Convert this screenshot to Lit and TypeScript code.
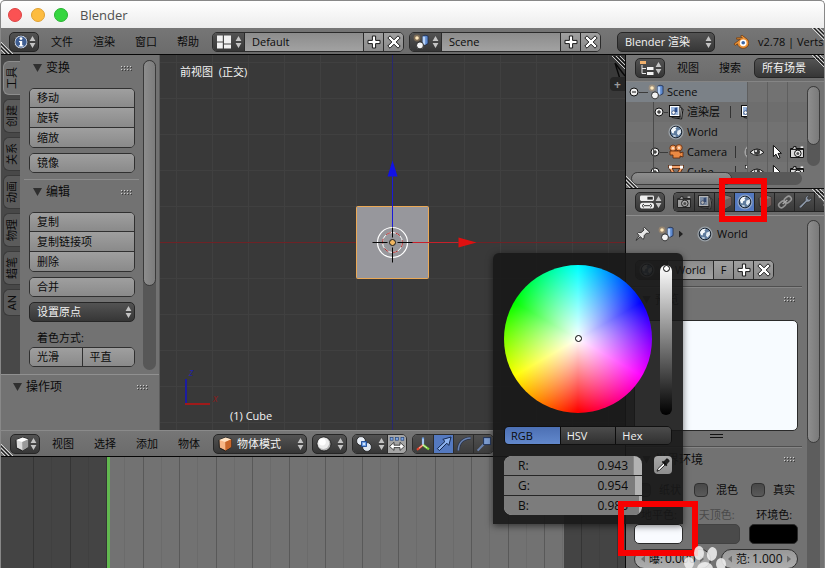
import { LitElement, html, svg, css, nothing } from "lit";
import { customElement, property } from "lit/decorators.js";
import { classMap } from "lit/directives/class-map.js";
import { styleMap } from "lit/directives/style-map.js";

const globe = svg`
  <circle cx="8" cy="8" r="7.6" fill="#b4bfca" opacity=".6"/>
  <circle cx="8" cy="8" r="5.8" fill="#5f7c9e" stroke="#1c2530" stroke-width="1"/>
  <path d="M3 6.5C4 3.6 6.4 2.6 8.8 2.9L7.4 4.6 8.4 6 6.2 7.2 5.6 9.4 4 9Z" fill="#f4f8fb"/>
  <path d="M9.4 6.8L12.8 5.2 13 8.6 10.6 11.6 9 9.8Z" fill="#e4ecf3"/>
  <path d="M5 10.8L8 11.6 7.4 13.2 5.4 12.4Z" fill="#c3d2e0"/>`;

const scene = svg`
  <path d="M9.6 2.2L12 1.2 15 2V9.6L12.4 11 9.6 10Z" fill="#5f8bd0" stroke="#1b2a4c" stroke-width=".8"/>
  <path d="M9.6 2.2L12.2 3V11L9.6 10Z" fill="#b8d2f6"/>
  <circle cx="7" cy="11.4" r="3.5" fill="#f4f4f4" stroke="#222" stroke-width=".9"/>
  <path d="M8 14A3 3 0 0 0 9.8 10.4Q9.4 13 8 14Z" fill="#999"/>
  <circle cx="4" cy="4" r="3.4" fill="#e8b06a" opacity=".3"/>
  <circle cx="4" cy="4" r="1.8" fill="#ffe9bd"/>`;

const layers = svg`
  <path d="M5 4L15 5 13.6 15 4.4 13.6Z" fill="#ddd" stroke="#111" stroke-width="1"/>
  <path d="M4 2.6L13.6 3.4 12.6 13.6 3.4 13Z" fill="#eee" stroke="#111" stroke-width=".8"/>
  <rect x="1.5" y="1.5" width="10.4" height="11" fill="#fff" stroke="#111"/>
  <rect x="3" y="3" width="7.4" height="8" fill="#9db8de"/>
  <path d="M6.6 4L9.2 3.6V8H6.6Z" fill="#2a4c8c"/><circle cx="5.6" cy="8.6" r="1.8" fill="#fff" stroke="#1e3562" stroke-width=".7"/>`;

const still = svg`
  <path d="M1.5 4.5H4L4.6 2.6H7V4.5H14.5V13.5H1.5Z" fill="#d9d9d9" stroke="#111"/>
  <path d="M2 5.4H14" stroke="#111" stroke-width="1"/>
  <circle cx="8.8" cy="9.4" r="3.3" fill="#eee" stroke="#111"/><circle cx="8.8" cy="9.4" r="1.5" fill="#555"/>
  <rect x="11.6" y="2.4" width="2.6" height="1.6" fill="#eee"/>`;

const cubeIcon = (top: string, left: string, right: string) => svg`
  <path d="M2 4L8.6 1.4 14.4 3.2V11L8.4 14.8 2.4 11.8Z" fill="${left}" stroke="#111" stroke-width=".9"/>
  <path d="M2 4L8.6 1.4 14.4 3.2 8.2 6Z" fill="${top}"/>
  <path d="M8.2 6L14.4 3.2V11L8.4 14.8Z" fill="${right}"/>`;

const icons = {
  info: svg`<circle cx="8" cy="8" r="6.8" fill="#e8edf5" stroke="#111" stroke-width=".6"/><circle cx="8" cy="8" r="5.7" fill="#3f5e92"/>
    <circle cx="8" cy="4.6" r="1.4" fill="#fff"/><path d="M6 7H9.2V11.2H10.4V12.4H5.8V11.2H7V8.2H6Z" fill="#fff"/>`,
  layout: svg`<path d="M1 1.5H6.8V7.4H1ZM8 1.5H15V9.4H8ZM1 8.6H6.8V14.5H1ZM8 10.6H15V14.5H8Z" fill="#f1f1f1"/>`,
  scene,
  globe,
  layers,
  still,
  tree: svg`<rect x="1" y="1" width="6" height="3" fill="#f0b06c"/><path d="M3 5V13.5H7M3 8.5H7" stroke="#e9e9e9" fill="none"/><path d="M8 7H14.5V10H8ZM8 12H14.5V15H8Z" fill="#f3f3f3"/>`,
  props: svg`<rect x="1" y="1.5" width="14" height="5.4" rx="1.4" fill="#f0f0f0"/><rect x="8.4" y="2.8" width="5.4" height="2.8" fill="#333"/>
    <rect x="1" y="8.8" width="14" height="5.8" rx="2.6" fill="#f0f0f0"/><path d="M5 10L3 11.7 5 13.4M11 10L13 11.7 11 13.4M5 11.7H11" stroke="#333" fill="none"/>`,
  logo: svg`<path d="M1 10L7.4 5.2H3.6V3.8H9.4L7.6 2.2 9 1.2 14.4 5.4A5 4.8 0 0 1 6 12.6 4.6 4.6 0 0 1 4.4 9.8L2.2 11.4Z" fill="#ee9438" stroke="#6b3509" stroke-width=".7"/>
    <circle cx="10.2" cy="8.8" r="3.4" fill="#fff"/><circle cx="10.2" cy="8.8" r="1.8" fill="#3b66a6"/>`,
  cube: cubeIcon("#fff", "#dadada", "#9a9a9a"),
  cubeOrange: cubeIcon("#ffe3c4", "#f8b686", "#c8672c"),
  sphere: svg`<circle cx="8" cy="8" r="7" fill="#b5b5b5" stroke="#111" stroke-width=".8"/><circle cx="7.4" cy="7.2" r="5.8" fill="#ececec"/><circle cx="6.4" cy="6" r="3.4" fill="#fff"/>`,
  pivot: svg`<circle cx="5" cy="5" r="4.4" fill="#e9eef5" stroke="#111" stroke-width=".7"/><circle cx="11" cy="11" r="4.4" fill="#dfe6ef" stroke="#111" stroke-width=".7"/>
    <rect x="5.6" y="5.6" width="4.8" height="4.8" fill="#7fb0f4" stroke="#1d4a94"/><rect x="7.2" y="7.2" width="1.6" height="1.6" fill="#fff"/>`,
  centers: svg`<g fill="#7fa8e6" stroke="#23447c" stroke-width=".7"><rect x="1.2" y="1.4" width="2.8" height="2.8"/><rect x="6.6" y="1.4" width="2.8" height="2.8"/><rect x="12" y="1.4" width="2.8" height="2.8"/></g>
    <path d="M.6 10.4L5 6.4V9.2H11V6.4L15.4 10.4 11 14.4V11.6H5V14.4Z" fill="#fff" stroke="#222" stroke-width=".8"/>`,
  axis: svg`<path d="M8 9V1.6" stroke="#72a3e8" stroke-width="2.2"/><path d="M8 9L2 13.8" stroke="#e2442d" stroke-width="2.2"/><path d="M8 9L14 13.4" stroke="#7fd53c" stroke-width="2.2"/><path d="M8 3V9L4 12.2M8 9L12 12" stroke="#fff" stroke-width=".7" fill="none"/>`,
  arrow: svg`<path d="M1.4 12.6L9 5.4 6.8 3.4 15 1 12.8 9.4 10.8 7.2 3.4 14.6Z" fill="#8fb4f0" stroke="#14284e" stroke-width="1"/>`,
  rotate: svg`<path d="M2.4 14.6C2.4 7 7 2.4 14.6 2" fill="none" stroke="#27324c" stroke-width="3"/><path d="M2.4 14.6C2.4 7 7 2.4 14.6 2" fill="none" stroke="#6a82ae" stroke-width="1.6"/>`,
  scale: svg`<path d="M1.6 14.6L9 7" stroke="#6a82ae" stroke-width="2"/><rect x="7.6" y="1.6" width="7" height="7" fill="#7c9cd0" stroke="#22345a"/>`,
  plus: svg`<path d="M6.4 2H9.6V6.4H14V9.6H9.6V14H6.4V9.6H2V6.4H6.4Z" fill="#fff" stroke="#1a1a1a"/>`,
  cross: svg`<path d="M4 1.8L8 5.8 12 1.8 14.2 4 10.2 8 14.2 12 12 14.2 8 10.2 4 14.2 1.8 12 5.8 8 1.8 4Z" fill="#fff" stroke="#1a1a1a"/>`,
  camera: svg`<circle cx="5" cy="4.2" r="3.2" fill="#f09a5c" stroke="#5a2508" stroke-width=".8"/><circle cx="11" cy="3.8" r="3.2" fill="#f09a5c" stroke="#5a2508" stroke-width=".8"/>
    <path d="M2 7H12V9L15 8V13L12 12V14H5V11H2Z" fill="#ec8a44" stroke="#5a2508" stroke-width=".8"/><circle cx="5" cy="4.2" r="1.2" fill="#ffe0c4"/><circle cx="11" cy="3.8" r="1.2" fill="#ffe0c4"/>`,
  mesh: svg`<path d="M2 3H14L8 14Z" fill="none" stroke="#5a2508" stroke-width="3.4"/><path d="M2 3H14L8 14Z" fill="none" stroke="#f2a06a" stroke-width="1.8"/>
    <g fill="#fff"><rect x="1" y="1.6" width="3" height="3"/><rect x="12" y="1.6" width="3" height="3"/></g>`,
  meshData: svg`<path d="M3 3H13L8 13Z" fill="none" stroke="#ccc"/><g fill="#fff" stroke="#111" stroke-width=".6"><rect x="1.5" y="1.5" width="3" height="3"/><rect x="11.5" y="1.5" width="3" height="3"/><rect x="6.5" y="11.5" width="3" height="3"/></g>`,
  cameraData: svg`<circle cx="8" cy="8" r="7.6" fill="#a4a4a4"/><path d="M3 5H10V11H3ZM10 8L14 5V11Z" fill="#eee" stroke="#222"/>`,
  eye: svg`<path d="M1 8.4Q8 1.6 15 8.4 8 14.4 1 8.4Z" fill="#e9e9e9" stroke="#111"/><circle cx="8" cy="8" r="3" fill="#3c3c3c"/><circle cx="7" cy="7" r="1" fill="#fff"/>`,
  cursor: svg`<path d="M4.4 1.4V12.6L7 10.2 9 14.6 11 13.6 9 9.4H12.4Z" fill="#fff" stroke="#111"/>`,
  objectTab: cubeIcon("#b09a94", "#a08480", "#8c6c66"),
  link: svg`<g transform="rotate(-40 8 8)" fill="none"><rect x="0.6" y="5.4" width="7.6" height="5.2" rx="2.6" stroke="#ccc" stroke-width="1.6"/><rect x="7.8" y="5.4" width="7.6" height="5.2" rx="2.6" stroke="#ccc" stroke-width="1.6"/><path d="M5 8H11" stroke="#eee" stroke-width="1.4"/></g>`,
  wrench: svg`<path d="M2 12.4L8.4 6.4C7.6 3.6 9.6 1.2 12.4 1.6L10.4 4 11.8 5.6 14.4 3.8C14.8 6.6 12.4 8.6 9.8 8L4 14.2Q1.6 14.6 2 12.4Z" fill="#b9cbe6" stroke="#222" stroke-width=".8"/>`,
  vertex: svg`<path d="M3 2L8 10 14 4" fill="none" stroke="#999"/><circle cx="3" cy="2.6" r="1.6" fill="#ddd"/><circle cx="8" cy="11" r="1.6" fill="#ddd"/>`,
  pin: svg`<path d="M9.4 1.4L14.8 6.4 13.2 7.4 11.6 7 9.2 9.6 9 12.4 7.8 13.2 5.4 10.6 1.4 14.4 1 14.2 4.2 9.6 2.4 7.6 3.4 6.6 6.2 6.6 9 4 8.4 2.4Z" fill="#e8e8e8" stroke="#1a1a1a" stroke-width=".8"/>`,
  dropper: svg`<path d="M8.6 5.4L11 2.4C12.2 1 15 3.4 13.6 5L10.8 7.6Z" fill="#222" stroke="#111"/><path d="M7.4 4.4L11.8 8.6" stroke="#111" stroke-width="1.8"/><path d="M8.4 6.4L10 8 4.6 13.2 2 14.2 3 11.6Z" fill="#fff" stroke="#111" stroke-width=".9"/>`,
};

type IconName = keyof typeof icons;

const icon = (name: IconName, cls = "") =>
  html`<svg class="icon ${cls}" viewBox="0 0 16 16" width="16" height="16" aria-hidden="true">${icons[name]}</svg>`;

const arrows = html`<svg class="arrows" viewBox="0 0 7 14" width="7" height="14" aria-hidden="true">
  <path d="M3.5 1L6.4 6H.6ZM3.5 13L6.4 8H.6Z" fill="#c4c4c4"/></svg>`;

const dots = html`<svg class="dots" viewBox="0 0 12 5" width="12" height="5" aria-hidden="true">
  <path d="M0 .5H12M0 3.5H12" stroke="#d0d0d0" stroke-dasharray="1 2"/><path d="M1 1.5H12M1 4.5H12" stroke="#3c3c3c" stroke-dasharray="1 2"/></svg>`;

const corner = (cls: string) => html`<svg class="corner ${cls}" viewBox="0 0 12 12" width="12" height="12" aria-hidden="true">
  <path d=${cls === "bl" ? "M0 0L12 12M0 4L8 12M0 8L4 12" : "M0 0L12 12M4 0L12 8M8 0L12 4"} stroke="#d6d6d6"/>
  <path d=${cls === "bl" ? "M0 2L10 12M0 6L6 12" : "M2 0L12 10M6 0L12 6"} stroke="#1c1c1c"/></svg>`;

const shared = css`
  * { box-sizing: border-box; }
  :host {
    font: 11px/14px "Open Sans", "Noto Sans CJK SC", sans-serif;
    color: #0b0b0b;
  }
  button, input, select {
    font: inherit;
    color: inherit;
    margin: 0;
    padding: 0;
    border: 0;
    border-radius: 0;
    background: none;
    appearance: none;
    outline: none;
    min-width: 0;
  }
  .icon, .arrows, .dots { display: block; flex: none; }
  .dots { margin-left: auto; margin-right: 2px; }
  .bar {
    display: flex;
    align-items: center;
    overflow: hidden;
    position: relative;
    background: linear-gradient(#767676, #6b6b6b);
    flex: none;
    white-space: nowrap;
  }
  .menus { display: flex; margin-left: 2px; margin-right: 3px; }
  .menus button { padding: 0 10px; height: 20px; }
  .drop {
    display: flex;
    align-items: center;
    justify-content: space-between;
    height: 20px;
    width: 30px;
    padding: 0 2px 0 3px;
    flex: none;
    color: #f2f2f2;
    border: 1px solid #262626;
    border-radius: 5px;
    background: linear-gradient(#535353, #363636);
  }
  .pick { position: relative; flex: none; }
  .pick select {
    width: 100%;
    height: 20px;
    padding-left: 7px;
    color: #f2f2f2;
    border: 1px solid #262626;
    border-radius: 5px;
    background: linear-gradient(#535353, #363636);
    display: block;
  }
  .pick .arrows { position: absolute; right: 3px; top: 3px; pointer-events: none; }
  .pick .icon { position: absolute; left: 4px; top: 2px; pointer-events: none; }
  .pick .icon + select { padding-left: 23px; }
  .group { display: flex; flex: none; height: 20px; border: 1px solid #2b2b2b; border-radius: 5px; overflow: hidden; }
  .group > * + * { border-left: 1px solid #2b2b2b; }
  .group .drop { height: 18px; border: 0; border-radius: 0; width: 31px; }
  .group input { flex: 1; padding-left: 7px; background: linear-gradient(#8c8c8c, #a2a2a2); }
  .group .sq { width: 20px; display: grid; place-items: center; background: linear-gradient(#a0a0a0, #8a8a8a); }
  .corner { position: absolute; pointer-events: none; }
  .corner.bl { left: 0; bottom: 0; }
  .corner.tr { right: 0; top: 0; }
`;

@customElement("tool-shelf")
class ToolShelf extends LitElement {
  static styles = [shared, css`
    :host { display: flex; flex-direction: column; background: #727272; border-right: 1px solid #5c5c5c; min-height: 0; }
    .upper { display: flex; flex: 1; min-height: 0; overflow: hidden; }
    .tabs { width: 19px; background: #484848; display: flex; flex-direction: column; gap: 4px; padding: 6px 0 0 2px; }
    .tab {
      height: 34px;
      flex: none;
      color: #0b0b0b;
      border: 1px solid #3a3a3a;
      border-right: 0;
      border-radius: 6px 0 0 6px;
      background: #5b5b5b;
      display: grid;
      place-items: center;
    }
    .tab.on { background: #727272; border-color: #8d8d8d; }
    .tab.short { height: 27px; }
    .tab span { writing-mode: vertical-rl; text-orientation: sideways; transform: rotate(180deg); line-height: 14px; }
    .panels { flex: 1; padding: 1px 8px 0 9px; }
    .title { display: flex; align-items: center; height: 24px; font-size: 12px; gap: 4px; }
    .tri { width: 9px; height: 8px; margin-left: 4px; background: #2f2f2f; clip-path: polygon(0 0, 100% 0, 50% 100%); }
    .stack { display: flex; flex-direction: column; border: 1px solid #303030; border-radius: 5px; overflow: hidden; }
    .stack.row { flex-direction: row; }
    .stack button { flex: 1; height: 18px; flex-basis: auto; text-align: left; padding-left: 7px; background: linear-gradient(#9f9f9f, #8a8a8a); }
    .stack button + button { border-top: 1px solid #303030; height: 20px; }
    .row button + button { border-top: 0; border-left: 1px solid #303030; height: 18px; }
    .row button { flex-basis: 0; }
    .body { display: flex; flex-direction: column; gap: 5px; padding: 8px 0 6px; }
    .second { border-top: 1px solid #8c8c8c; margin-left: -5px; padding-left: 5px; margin-right: -4px; padding-right: 4px; }
    .caption { padding: 4px 8px 0; height: 20px; }
    .scroll { width: 13px; margin: 5px 3px 4px 0; border-radius: 7px; background: #575757; }
    .thumb { height: 73%; border-radius: 7px; border: 1px solid #3a3a3a; background: linear-gradient(90deg, #8d8d8d, #7c7c7c); }
    .lower { height: 56px; flex: none; border-top: 1px solid #909090; padding: 0 8px; }
  `];

  render() {
    const tabs = ["工具", "创建", "关系", "动画", "物理", "蜡笔", "AN"];
    return html`
      <div class="upper">
        <nav class="tabs">
          ${tabs.map((t, i) => html`<button class=${classMap({ tab: true, on: i === 0, short: t === "AN" })}><span>${t}</span></button>`)}
        </nav>
        <div class="panels">
          <section>
            <div class="title"><i class="tri"></i>变换${dots}</div>
            <div class="body">
              <div class="stack"><button>移动</button><button>旋转</button><button>缩放</button></div>
              <div class="stack"><button>镜像</button></div>
            </div>
          </section>
          <section class="second">
            <div class="title"><i class="tri"></i>编辑${dots}</div>
            <div class="body">
              <div class="stack"><button>复制</button><button>复制链接项</button><button>删除</button></div>
              <div class="stack"><button>合并</button></div>
              <div class="pick"><select aria-label="设置原点"><option>设置原点</option></select>${arrows}</div>
              <div>
                <div class="caption">着色方式:</div>
                <div class="stack row"><button>光滑</button><button>平直</button></div>
              </div>
            </div>
          </section>
        </div>
        <div class="scroll"><div class="thumb"></div></div>
      </div>
      <section class="lower"><div class="title"><i class="tri"></i>操作项${dots}</div></section>`;
  }
}

@customElement("view-port")
class ViewPort extends LitElement {
  static styles = [shared, css`
    :host { display: block; position: relative; background: #393939; overflow: hidden; color: #f4f4f4; }
    .canvas { position: absolute; inset: 0; width: 100%; height: 100%; display: block; }
    .canvas svg { overflow: visible; }
    .view { position: absolute; left: 20px; top: 10px; white-space: pre; }
    .object { position: absolute; left: 70px; bottom: 7px; }
    .gizmo { position: absolute; left: 22px; bottom: 22px; }
    .gizmo text { font: italic 10px "Open Sans", sans-serif; }
    .more { position: absolute; right: 0; top: 22px; width: 15px; height: 14px; border-radius: 4px 0 0 4px; background: #262626; color: #9a9a9a; line-height: 13px; font-weight: 700; font-size: 12px; }
    .fold { position: absolute; right: 0; top: 1px; }
  `];

  render() {
    const steps = Array.from({ length: 41 }, (_, i) => (i - 20) * 36);
    return html`
      <svg class="canvas" aria-hidden="true">
        <svg x="50%" y="50%" width="1" height="1">
          ${steps.map((p) => svg`<path d="M${p} -800V800M-800 ${p}H800" stroke="#404040" fill="none"/>`)}
          <path d="M-1500 0H1500" stroke="#6e2226"/>
          <path d="M0 -800V800" stroke="#28286e"/>
          <rect x="-36" y="-36" width="72" height="72" rx="1" fill="#97979c" stroke="#eba956"/>
          <path d="M0 -66V-8" stroke="#1a1ad8"/>
          <path d="M12 0H66" stroke="#c8202a"/>
          <path d="M0 -82L5 -66H-5Z" fill="#1212e6"/>
          <path d="M84 0L66 5V-5Z" fill="#e01010"/>
          <circle r="10" fill="none" stroke="#fff"/>
          <circle r="10" fill="none" stroke="#b03030" stroke-dasharray="5 5"/>
          <circle r="15" fill="none" stroke="#fff" stroke-width="1.2"/>
          <path d="M-20 0H-5M5 0H20M0 -15V-5M0 5V20" stroke="#050505"/>
          <circle r="3" fill="#f0b660" stroke="#1a1a1a"/>
        </svg>
      </svg>
      <div class="view">前视图  (正交)</div>
      <svg class="gizmo" width="40" height="44" viewBox="0 0 40 44" aria-hidden="true">
        <path d="M4 39V15" stroke="#1c1ca0" stroke-width="2"/><path d="M3 40H28" stroke="#a01a1a" stroke-width="2"/>
        <text x="7" y="12" fill="#2222a8">z</text><text x="31" y="38" fill="#8c1c1c">x</text>
      </svg>
      <div class="object">(1) Cube</div>
      <svg class="fold" width="13" height="24" viewBox="0 0 13 24" aria-hidden="true"><path d="M3 7L8 23M3 7L13 20" stroke="#080808" stroke-width="1.4"/><path d="M0 0L13 13M4 0L13 9M8 0L13 5" stroke="#c8c8c8"/><path d="M2 0L13 11M6 0L13 7" stroke="#111"/></svg>
      <button class="more" aria-label="展开">+</button>`;
  }
}

@customElement("time-line")
class TimeLine extends LitElement {
  static styles = [shared, css`
    :host { display: block; background: #444; overflow: hidden; }
    svg { display: block; }
  `];

  render() {
    const major = Array.from({ length: 40 }, (_, i) => 32 + Math.round(i * 36.5));
    return html`<svg width="100%" height="100%" aria-hidden="true">
      <rect x="106" width="457" height="100%" fill="#727272"/>
      ${major.map((x) => svg`<rect x="${x}" width="1" height="100%" fill="#000" opacity=".22"/><rect x="${x + 18}" width="1" height="100%" fill="#000" opacity=".06"/>`)}
      <rect x="106" width="3" height="100%" fill="#62b850"/>
    </svg>`;
  }
}

@customElement("scene-outliner")
class SceneOutliner extends LitElement {
  static styles = [shared, css`
    :host { display: flex; flex-direction: column; flex: none; height: 134px; border-bottom: 1px solid #0a0a0a; background: #727272; position: relative; overflow: hidden; }
    .bar { height: 27px; padding-left: 9px; border-bottom: 1px solid #858585; }
    .scope { width: 90px; }
    .area { display: flex; flex: 1; min-height: 0; padding-right: 4px; }
    .main { flex: 1; min-width: 0; }
    .rows { height: 90px; overflow: hidden; position: relative; }
    .row { display: flex; height: 20px; align-items: center; }
    .row:nth-child(even) { background: #6e6e6e; }
    .name { flex: 1; min-width: 0; height: 20px; display: flex; align-items: center; overflow: hidden; white-space: nowrap; }
    .scene .name { background: #7b8187; padding-left: 3px; }
    .layer .name { padding-left: 28px; }
    .world .name { padding-left: 42px; }
    .object .name { padding-left: 24px; }
    .exp { flex: none; width: 10px; height: 10px; }
    .stem { width: 4px; flex: none; border-top: 1px solid #3c3c3c; }
    .scene .stem { width: 9px; }
    .object .stem { width: 8px; }
    .name .text { margin-left: 3px; }
    .sep { width: 1px; height: 12px; margin: 0 8px 0 auto; background: #333; flex: none; }
    .layer .sep { margin-right: 9px; }
    .layer .tail { margin-right: -9px; }
    .object .tail { margin-right: -13px; }
    .col { width: 20px; height: 20px; flex: none; border-left: 1px solid #5f5f5f; padding: 2px 1px; }
    .guide { position: absolute; left: 27px; top: 20px; bottom: 0; width: 1px; background: #4a4a4a; }
    .hscroll { height: 13px; margin: 0 5px; border-radius: 7px; background: #585858; }
    .hthumb { width: 59%; height: 13px; border: 1px solid #3c3c3c; border-radius: 7px; background: linear-gradient(#8e8e8e, #7a7a7a); }
    .vscroll { width: 13px; height: 80px; margin-top: 4px; border-radius: 7px; background: #585858; }
    .vthumb { height: 59px; border: 1px solid #3c3c3c; border-radius: 7px; background: linear-gradient(90deg, #8e8e8e, #7a7a7a); }
  `];

  private row(kind: string, name: string, glyph: IconName, opts: { exp?: string; tail?: IconName; cols?: boolean } = {}) {
    return html`<div class="row ${kind}">
      <div class="name">
        ${opts.exp
          ? html`<svg class="exp" viewBox="0 0 10 10" aria-hidden="true"><circle cx="5" cy="5" r="4" fill="#eee" stroke="#111"/><path d=${opts.exp === "-" ? "M3 5H7" : "M3 5H7M5 3V7"} stroke="#111"/></svg><i class="stem"></i>`
          : nothing}
        ${icon(glyph)}<span class="text">${name}</span>
        ${opts.tail ? html`<i class="sep"></i>${icon(opts.tail, "tail")}` : nothing}
      </div>
      ${(["eye", "cursor", "still"] as IconName[]).map((n) => html`<div class="col">${opts.cols ? icon(n) : nothing}</div>`)}
    </div>`;
  }

  render() {
    return html`
      <div class="bar">
        <button class="drop" aria-label="编辑器类型">${icon("tree")}${arrows}</button>
        <div class="menus"><button>视图</button><button>搜索</button></div>
        <div class="pick scope"><select aria-label="范围"><option>所有场景</option></select></div>
        ${corner("tr")}
      </div>
      <div class="area">
        <div class="main">
          <div class="rows">
            ${this.row("scene", "Scene", "scene", { exp: "-" })}
            ${this.row("layer", "渲染层", "layers", { exp: "+", tail: "layers" })}
            ${this.row("world", "World", "globe")}
            ${this.row("object", "Camera", "camera", { exp: "+", tail: "cameraData", cols: true })}
            ${this.row("object", "Cube", "mesh", { exp: "+", tail: "meshData", cols: true })}
            <i class="guide"></i>
          </div>
          <div class="hscroll"><div class="hthumb"></div></div>
        </div>
        <div class="vscroll"><div class="vthumb"></div></div>
      </div>
      ${corner("bl")}`;
  }
}

@customElement("color-popup")
class ColorPopup extends LitElement {
  @property({ attribute: false }) channels = [
    { name: "R", value: 0.943 },
    { name: "G", value: 0.954 },
    { name: "B", value: 0.983 },
  ];

  static styles = [shared, css`
    :host { display: block; padding: 12px 11px 9px; border-radius: 6px 6px 0 0; background: rgba(24, 24, 24, .91); box-shadow: 0 2px 7px rgba(0, 0, 0, .55); }
    .pickers { display: flex; justify-content: space-between; height: 150px; }
    .wheel { position: relative; width: 148px; height: 148px; border-radius: 50%;
      background: radial-gradient(closest-side, #fff, transparent 98%), conic-gradient(#0ff, #00f 60deg, #f0f 120deg, #f00 180deg, #ff0 240deg, #0f0 300deg, #0ff); }
    .dot { position: absolute; left: 71px; top: 70px; width: 7px; height: 7px; border: 1px solid #000; border-radius: 50%; background: #fff; }
    .value { width: 12px; height: 150px; writing-mode: vertical-lr; direction: rtl; border-radius: 6px; background: linear-gradient(#fff, #000); }
    .value::-webkit-slider-thumb { appearance: none; width: 7px; height: 7px; border: 1px solid #000; border-radius: 50%; background: #fff; }
    .modes { display: flex; margin-top: 11px; border: 1px solid #111; border-radius: 5px; overflow: hidden; height: 19px; }
    .modes button { flex: 1; text-align: left; padding-left: 6px; color: #f0f0f0; background: linear-gradient(#4c4c4c, #303030); }
    .modes button + button { border-left: 1px solid #0c0c0c; }
    .modes .on { background: linear-gradient(#4c70b4, #6288cc); color: #0b0b0b; }
    .fields { display: flex; justify-content: space-between; align-items: flex-start; margin-top: 11px; }
    .channels { width: 138px; border-radius: 8px; overflow: hidden; }
    .channel { display: flex; align-items: center; height: 19px; padding: 0 14px; font-size: 12px; background: linear-gradient(#7c7c7c, #7c7c7c) no-repeat #b2b2b2; }
    .channel + .channel { border-top: 1px solid #262626; height: 20px; }
    .channel input { flex: 1; text-align: right; }
    .dropper { width: 18px; height: 18px; border-radius: 4px; background: linear-gradient(#a8a8a8, #8e8e8e); display: grid; place-items: center; }
  `];

  render() {
    return html`
      <div class="pickers">
        <div class="wheel"><i class="dot"></i></div>
        <input class="value" type="range" min="0" max="100" value="100" aria-label="明度" />
      </div>
      <div class="modes"><button class="on">RGB</button><button>HSV</button><button>Hex</button></div>
      <div class="fields">
        <div class="channels">
          ${this.channels.map((c) => html`<label class="channel" style=${styleMap({ backgroundSize: `${Math.round(c.value * 100)}% 100%` })}>
            ${c.name}:<input type="text" .value=${c.value.toFixed(3)} /></label>`)}
        </div>
        <button class="dropper" aria-label="拾色器">${icon("dropper")}</button>
      </div>`;
  }
}

@customElement("world-properties")
class WorldProperties extends LitElement {
  static styles = [shared, css`
    :host { display: block; position: relative; flex: 1; min-height: 0; }
    .clip { height: 100%; overflow: hidden; background: #727272; display: flex; flex-direction: column; }
    .bar { height: 27px; padding-left: 9px; border-bottom: 1px solid #8e8e8e; }
    .tabs { margin-left: 8px; display: flex; border: 1px solid #232323; border-right: 0; border-radius: 5px 0 0 5px; overflow: hidden; height: 20px; }
    .tabs button { width: 20px; flex: none; display: grid; place-items: center; background: linear-gradient(#525252, #3a3a3a); }
    .tabs button + button { border-left: 1px solid #232323; }
    .tabs .icon { opacity: .6; }
    .tabs .on { background: #5479c0; }
    .tabs .on .icon { opacity: 1; }
    .split { display: flex; flex: 1; min-height: 0; padding-right: 4px; }
    .content { flex: 1; min-width: 0; margin-right: 5px; }
    .path { display: flex; align-items: center; height: 36px; padding-left: 9px; }
    .path .icon + .icon { margin-left: 7px; }
    .chev { width: 4px; height: 7px; margin: 0 14px 0 5px; background: #222; clip-path: polygon(0 0, 100% 50%, 0 100%); }
    .path .text { margin-left: 4px; }
    .data { margin: 8px 28px 6px 9px; }
    .panel { border-top: 1px solid #4f4f4f; box-shadow: inset 0 1px #858585; padding: 0 4px 0 8px; }
    .title { display: flex; align-items: center; height: 25px; font-size: 12px; gap: 4px; padding-left: 8px; }
    .tri { width: 9px; height: 8px; background: #2f2f2f; clip-path: polygon(0 0, 100% 0, 50% 100%); }
    .preview { height: 111px; margin-top: 8px; border: 1px solid #2a2a2a; border-radius: 5px; background: #f7fbff; }
    .grip { width: 13px; height: 4px; margin: 3px auto 8px; border: solid #111; border-width: 1px 0; }
    .trio { display: grid; grid-template-columns: repeat(3, 1fr); gap: 9px; }
    .check { display: flex; align-items: center; gap: 8px; height: 20px; white-space: nowrap; }
    .check input { width: 14px; height: 14px; flex: none; border: 1px solid #303030; border-radius: 4px; background: linear-gradient(#484848, #5a5a5a); }
    .checks { margin: 8px 0; padding-left: 3px; grid-template-columns: repeat(3, 48px); }
    .label { display: block; height: 16px; padding-left: 7px; white-space: nowrap; }
    .dim { color: #4a4a4a; }
    .swatch { display: block; width: 100%; height: 20px; border: 1px solid #2a2a2a; border-radius: 5px; }
    .horizon { background: #f9fbff; }
    .zenith { background: #4a4a4a; border-color: #424242; }
    .ambient { background: #000; }
    .pair { display: flex; gap: 10px; margin-top: 5px; }
    .num { flex: 1; min-width: 0; display: flex; align-items: center; height: 20px; padding: 0 6px; border: 1px solid #303030; border-radius: 10px; background: linear-gradient(#989898, #adadad); }
    .num input { width: 34px; font-size: 12px; margin-right: auto; margin-left: 2px; }
    .num::before, .num::after { content: ""; width: 4px; height: 7px; background: #6c6c6c; clip-path: polygon(100% 0, 0 50%, 100% 100%); }
    .num::before { margin-right: 4px; }
    .num::after { clip-path: polygon(0 0, 100% 50%, 0 100%); }
    .scroll { width: 13px; margin-top: 4px; border-radius: 7px 7px 0 0; background: #5d5d5d; }
    .thumb { height: 223px; border: 1px solid #3c3c3c; border-radius: 7px; background: linear-gradient(90deg, #8e8e8e, #7a7a7a); }
    color-popup { position: absolute; left: -133px; top: 64px; width: 190px; height: 271px; z-index: 2; }
    .mark { position: absolute; border: 6px solid #f80000; z-index: 3; pointer-events: none; }
    .tab-mark { left: 93px; top: -11px; width: 48px; height: 44px; }
    .swatch-mark { left: -8px; top: 312px; width: 80px; height: 55px; }
    .paw { position: absolute; left: 56px; top: 356px; z-index: 4; pointer-events: none; }
  `];

  render() {
    const tabs: IconName[] = ["still", "layers", "objectTab", "globe", "objectTab", "link", "wrench", "vertex"];
    return html`
      <div class="clip">
        <div class="bar">
          <button class="drop" aria-label="编辑器类型">${icon("props")}${arrows}</button>
          <div class="tabs">${tabs.map((t) => html`<button class=${classMap({ on: t === "globe" })} aria-label=${t}>${icon(t)}</button>`)}</div>
          ${corner("tr")}
        </div>
        <div class="split">
          <div class="content">
            <div class="path">${icon("pin")}${icon("scene")}<i class="chev"></i>${icon("globe")}<span class="text">World</span></div>
            <div class="group data">
              <button class="drop" aria-label="浏览">${icon("globe")}</button>
              <input type="text" aria-label="名称" value="World" />
              <button class="sq">F</button>
              <button class="sq" aria-label="新建">${icon("plus")}</button>
              <button class="sq" aria-label="移除">${icon("cross")}</button>
            </div>
            <section class="panel">
              <div class="title"><i class="tri"></i>预览${dots}</div>
              <div class="preview"></div>
              <div class="grip"></div>
            </section>
            <section class="panel">
              <div class="title"><i class="tri"></i>世界环境${dots}</div>
              <div class="trio checks">
                <label class="check"><input type="checkbox" />纸状</label>
                <label class="check"><input type="checkbox" />混色</label>
                <label class="check"><input type="checkbox" />真实</label>
              </div>
              <div class="trio">
                <label><span class="label">地平色:</span><button class="swatch horizon"></button></label>
                <label><span class="label dim">天顶色:</span><button class="swatch zenith"></button></label>
                <label><span class="label">环境色:</span><button class="swatch ambient"></button></label>
              </div>
              <div class="pair">
                <label class="num">曝:<input type="text" value="0.000" /></label>
                <label class="num">范:<input type="text" value="1.000" /></label>
              </div>
            </section>
          </div>
          <div class="scroll"><div class="thumb"></div></div>
        </div>
      </div>
      <color-popup></color-popup>
      <div class="mark tab-mark"></div>
      <div class="mark swatch-mark"></div>
      <svg class="paw" width="44" height="23" viewBox="0 0 44 23" aria-hidden="true">
        <g fill="#f2f2f2" opacity=".85"><ellipse cx="17" cy="8" rx="5" ry="7"/><ellipse cx="30" cy="9" rx="5" ry="7" transform="rotate(12 30 9)"/><ellipse cx="7" cy="18" rx="5" ry="6"/><ellipse cx="39" cy="19" rx="5" ry="6"/><ellipse cx="23" cy="24" rx="8" ry="7"/></g>
      </svg>`;
  }
}

@customElement("app-root")
class AppRoot extends LitElement {
  static styles = [shared, css`
    :host { box-sizing: border-box; display: flex; flex-direction: column; height: 100vh; overflow: hidden; background: #727272; border: 1px solid #888; border-bottom: 0; border-radius: 5px 5px 0 0; }
    .titlebar { display: flex; align-items: center; gap: 9px; height: 27px; flex: none; padding-left: 7px; background: linear-gradient(#fff, #ececec); color: #505050; font-size: 13px; }
    .light { width: 14px; height: 14px; border-radius: 50%; border: 1px solid; }
    .close { background: #fb5253; border-color: #dc4444; }
    .min { background: #fdbc40; border-color: #dfa032; }
    .max { background: #35d63f; border-color: #28b432; }
    .name { margin-left: 3px; line-height: 18px; }
    .info { height: 27px; padding-left: 8px; padding-top: 1px; border-bottom: 1px solid #060606; }
    .info .group { width: 192px; }
    .info .group + .group { margin-left: 5px; }
    .engine { width: 98px; margin: 0 18px 0 16px; }
    .stats { margin-left: 9px; }
    .desk { display: flex; flex: 1; min-height: 0; }
    .left { display: flex; flex-direction: column; flex: 1; min-width: 0; }
    .work { display: flex; flex: 1; min-height: 0; }
    tool-shelf { width: 159px; flex: none; }
    view-port { flex: 1; min-width: 0; }
    .view-bar { height: 27px; padding-left: 9px; border-top: 1px solid #8a8a8a; border-bottom: 1px solid #060606; }
    .mode { width: 94px; }
    .shade { width: 35px; margin-left: 5px; }
    .pivot { width: 55px; margin-left: 5px; }
    .pivot .drop { width: 34px; }
    .pivot .sq { flex: 1; background: #a4a4a4; }
    .tools { margin-left: 5px; }
    .tools .sq { background: linear-gradient(#505050, #3c3c3c); }
    .tools .on { background: #5479c0; }
    time-line { height: 111px; flex: none; }
    .right { width: 199px; flex: none; display: flex; flex-direction: column; border-left: 1px solid #080808; }
  `];

  private block(name: string, glyph: IconName, label: string) {
    return html`<div class="group">
      <button class="drop" aria-label=${label}>${icon(glyph)}${arrows}</button>
      <input type="text" aria-label=${label} .value=${name} />
      <button class="sq" aria-label="新建">${icon("plus")}</button>
      <button class="sq" aria-label="移除">${icon("cross")}</button>
    </div>`;
  }

  render() {
    return html`
      <header class="titlebar"><i class="light close"></i><i class="light min"></i><i class="light max"></i><span class="name">Blender</span></header>
      <div class="bar info">
        <button class="drop" aria-label="编辑器类型">${icon("info")}${arrows}</button>
        <div class="menus"><button>文件</button><button>渲染</button><button>窗口</button><button>帮助</button></div>
        ${this.block("Default", "layout", "屏幕布局")}
        ${this.block("Scene", "scene", "场景")}
        <div class="pick engine"><select aria-label="渲染引擎"><option>Blender 渲染</option></select>${arrows}</div>
        ${icon("logo")}
        <span class="stats">v2.78 | Verts</span>
        ${corner("bl")}${corner("tr")}
      </div>
      <main class="desk">
        <div class="left">
          <div class="work"><tool-shelf></tool-shelf><view-port></view-port></div>
          <div class="bar view-bar">
            <button class="drop" aria-label="编辑器类型">${icon("cube")}${arrows}</button>
            <div class="menus"><button>视图</button><button>选择</button><button>添加</button><button>物体</button></div>
            <div class="pick mode">${icon("cubeOrange")}<select aria-label="模式"><option>物体模式</option></select>${arrows}</div>
            <button class="drop shade" aria-label="着色">${icon("sphere")}${arrows}</button>
            <div class="group pivot"><button class="drop" aria-label="轴心">${icon("pivot")}${arrows}</button><button class="sq" aria-label="仅中心">${icon("centers")}</button></div>
            <div class="group tools">
              <button class="sq" aria-label="操纵器">${icon("axis")}</button>
              <button class="sq on" aria-label="移动">${icon("arrow")}</button>
              <button class="sq" aria-label="旋转">${icon("rotate")}</button>
              <button class="sq" aria-label="缩放">${icon("scale")}</button>
            </div>
            ${corner("bl")}
          </div>
          <time-line></time-line>
        </div>
        <aside class="right"><scene-outliner></scene-outliner><world-properties></world-properties></aside>
      </main>`;
  }
}
